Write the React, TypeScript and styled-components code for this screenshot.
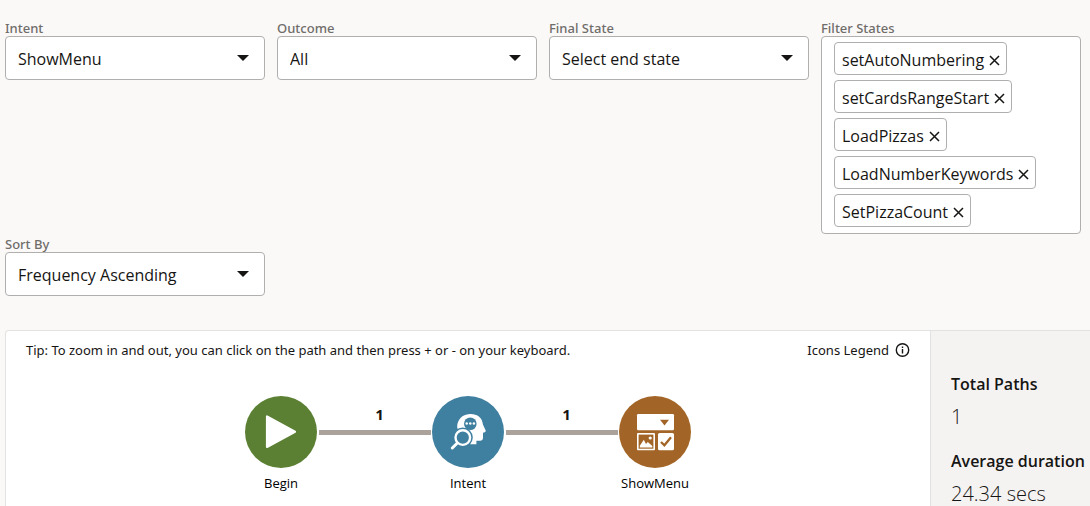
import React, { useState } from "react";
import styled, { createGlobalStyle } from "styled-components";

const GlobalStyle = createGlobalStyle`
  * { box-sizing: border-box; }
  body {
    margin: 0;
    background: #fbf9f8;
    color: #161513;
    font-family: "Open Sans", "Noto Sans", sans-serif;
    font-size: 16px;
  }
`;

const Page = styled.main`
  display: flex;
  flex-direction: column;
  min-height: 100vh;
  padding: 20px 0 0 5px;
`;

const Filters = styled.form`
  display: grid;
  grid-template-columns: repeat(4, 1fr);
  align-items: start;
  gap: 2px 12px;
  padding-right: 9px;
`;

const Field = styled.div`
  display: flex;
  flex-direction: column;
  min-width: 0;
`;

const Label = styled.label`
  color: #6f6d6a;
  font-family: "Noto Sans", "Open Sans", sans-serif;
  font-size: 13px;
  font-weight: 500;
  line-height: 16px;
`;

const SelectBox = styled.div`
  display: grid;
  grid-template-columns: 1fr auto;
  align-items: center;
`;

const Select = styled.select`
  grid-area: 1 / 1 / 2 / 3;
  appearance: none;
  width: 100%;
  height: 44px;
  padding: 2px 36px 0 12px;
  border: 1px solid #b1afad;
  border-radius: 4px;
  background: #fff;
  color: inherit;
  font: inherit;
`;

const Arrow = styled.svg`
  grid-area: 1 / 2 / 2 / 3;
  margin-right: 16px;
  pointer-events: none;
`;

const Chips = styled.ul`
  display: flex;
  flex-direction: column;
  align-items: flex-start;
  gap: 5px;
  margin: 0;
  padding: 5px 12px 6px;
  border: 1px solid #b1afad;
  border-radius: 4px;
  background: #fff;
  list-style: none;
`;

const Chip = styled.li`
  display: flex;
  align-items: center;
  gap: 5px;
  height: 33px;
  padding: 3px 6px 0 7px;
  border: 1px solid #b1afad;
  border-radius: 4px;
`;

const ChipRemove = styled.button`
  display: flex;
  padding: 0;
  border: 0;
  background: none;
  color: inherit;
  cursor: pointer;
`;

const Panel = styled.section`
  display: flex;
  flex: 1;
  margin-top: 34px;
  border: 1px solid #e4e2e0;
  border-width: 1px 0 0 1px;
  border-top-left-radius: 4px;
  background: #fff;
`;

const Canvas = styled.div`
  flex: 1;
  min-width: 0;
`;

const CanvasHeader = styled.header`
  display: flex;
  justify-content: space-between;
  align-items: center;
  padding: 9px 20px 0;
  font-family: "Noto Sans", "Open Sans", sans-serif;
  font-size: 13px;
  line-height: 20px;
`;

const Tip = styled.p`
  margin: 0;
`;

const LegendButton = styled.button`
  display: flex;
  align-items: center;
  gap: 6px;
  padding: 0;
  border: 0;
  background: none;
  color: inherit;
  font: inherit;
  cursor: pointer;
`;

const Path = styled.div`
  display: flex;
  justify-content: center;
  align-items: flex-start;
  margin-top: 36px;
`;

const Node = styled.figure`
  display: flex;
  flex-direction: column;
  align-items: center;
  width: 72px;
  margin: 0;
`;

const Disc = styled.svg<{ $color: string }>`
  width: 72px;
  height: 72px;
  border-radius: 50%;
  background: ${(p) => p.$color};
`;

const NodeName = styled.figcaption`
  margin-top: 5px;
  color: #000;
  font-size: 13px;
  line-height: 20px;
  white-space: nowrap;
`;

const Edge = styled.div`
  display: flex;
  flex-direction: column;
  justify-content: space-between;
  width: 115px;
  height: 39px;
  padding: 8px 1px 0 2px;
`;

const EdgeCount = styled.span`
  padding-left: 9px;
  font-size: 15px;
  font-weight: 700;
  line-height: 20px;
  text-align: center;
`;

const EdgeLine = styled.div`
  height: 5px;
  background: #aaa29b;
`;

const Stats = styled.dl`
  width: 160px;
  margin: 0;
  padding: 41px 0 0 20px;
  border-left: 1px solid #e4e2e0;
  background: #f5f3f2;
  white-space: nowrap;
`;

const StatName = styled.dt`
  font-weight: 600;
  line-height: 24px;
`;

const StatValue = styled.dd`
  margin: 9px 0 20px;
  font-size: 20px;
  font-weight: 300;
  line-height: 24px;

  &:last-child { margin-bottom: 0; }
`;

type DropDownProps = { id: string; label: string; options: string[] };

function DropDown({ id, label, options }: DropDownProps) {
  return (
    <Field>
      <Label htmlFor={id}>{label}</Label>
      <SelectBox>
        <Select id={id}>
          {options.map((o) => (
            <option key={o}>{o}</option>
          ))}
        </Select>
        <Arrow width="12" height="6" viewBox="0 0 12 6" aria-hidden="true">
          <path d="M0 0h12L6 6z" fill="#161513" />
        </Arrow>
      </SelectBox>
    </Field>
  );
}

function PlayIcon() {
  return (
    <path
      d="M22 20.5V51L50 35.700z"
      fill="#fff"
      stroke="#fff"
      strokeWidth="2.200"
      strokeLinejoin="round"
    />
  );
}

function IntentIcon({ color }: { color: string }) {
  return (
    <>
      <path
        d="M38.500 18C45.500 18 50.500 22 50.900 28.500L53.700 34.600Q54 35.900 52.800 36.200L51 36.700V41.800Q51 44.700 48 44.700H44.400V48.300H38V40L26 34Q24.600 31 25.400 28C27 21.500 32 18 38.500 18Z"
        fill="#fff"
      />
      <circle cx="38.300" cy="27.800" r="6.300" fill={color} />
      <circle cx="30.800" cy="41.600" r="10" fill={color} />
      <g fill="#fff">
        <circle cx="34.700" cy="27.500" r="1.250" />
        <circle cx="38.300" cy="27.500" r="1.250" />
        <circle cx="41.900" cy="27.500" r="1.250" />
      </g>
      <circle cx="30.800" cy="41.600" r="7.300" fill="none" stroke="#fff" strokeWidth="2.400" />
      <path d="M25.300 47L20.300 52" stroke="#fff" strokeWidth="3" strokeLinecap="round" />
    </>
  );
}

function MenuIcon({ color }: { color: string }) {
  return (
    <>
      <rect x="18" y="18" width="37" height="16.300" rx="1.200" fill="#fff" />
      <path d="M41 23.700h9L45.500 29.500z" fill={color} />
      <rect x="18" y="37" width="18" height="17.300" rx="1" fill="#fff" />
      <rect x="19.600" y="38.600" width="14.800" height="14.100" fill={color} />
      <path d="M20.800 51.600V49.800L24.800 43.800L27 48L28.800 46L33.300 50V51.600Z" fill="#fff" />
      <circle cx="31.200" cy="42" r="1.600" fill="#fff" />
      <rect x="39" y="37" width="16" height="17.300" rx="1.600" fill="#fff" />
      <path d="M42 46L45.400 49.300L52 41.300" fill="none" stroke={color} strokeWidth="2.300" />
    </>
  );
}

const states = [
  "setAutoNumbering",
  "setCardsRangeStart",
  "LoadPizzas",
  "LoadNumberKeywords",
  "SetPizzaCount",
];

const GREEN = "#5b8033";
const BLUE = "#3f7f9f";
const BROWN = "#a36527";

export default function App() {
  const [chips, setChips] = useState(states);

  return (
    <>
      <GlobalStyle />
      <Page>
        <Filters>
          <DropDown id="intent" label="Intent" options={["ShowMenu"]} />
          <DropDown id="outcome" label="Outcome" options={["All"]} />
          <DropDown id="final-state" label="Final State" options={["Select end state"]} />
          <Field>
            <Label as="span" id="filter-states">Filter States</Label>
            <Chips aria-labelledby="filter-states">
              {chips.map((name) => (
                <Chip key={name}>
                  {name}
                  <ChipRemove
                    type="button"
                    aria-label={`Remove ${name}`}
                    onClick={() => setChips(chips.filter((c) => c !== name))}
                  >
                    <svg width="11" height="11" viewBox="0 0 11 11" aria-hidden="true">
                      <path d="M1 1L10 10M10 1L1 10" stroke="#161513" strokeWidth="1.500" />
                    </svg>
                  </ChipRemove>
                </Chip>
              ))}
            </Chips>
          </Field>
          <DropDown id="sort-by" label="Sort By" options={["Frequency Ascending"]} />
        </Filters>

        <Panel>
          <Canvas>
            <CanvasHeader>
              <Tip>
                Tip: To zoom in and out, you can click on the path and then press + or - on your
                keyboard.
              </Tip>
              <LegendButton type="button">
                Icons Legend
                <svg width="15" height="15" viewBox="0 0 15 15" aria-hidden="true">
                  <circle cx="7.500" cy="7" r="6.200" fill="none" stroke="#161513" strokeWidth="1.400" />
                  <path d="M7.500 6V10.500M7.500 3.500V4.900" stroke="#161513" strokeWidth="1.400" />
                </svg>
              </LegendButton>
            </CanvasHeader>
            <Path>
              <Node>
                <Disc $color={GREEN} viewBox="0 0 72 72"><PlayIcon /></Disc>
                <NodeName>Begin</NodeName>
              </Node>
              <Edge>
                <EdgeCount>1</EdgeCount>
                <EdgeLine />
              </Edge>
              <Node>
                <Disc $color={BLUE} viewBox="0 0 72 72"><IntentIcon color={BLUE} /></Disc>
                <NodeName>Intent</NodeName>
              </Node>
              <Edge>
                <EdgeCount>1</EdgeCount>
                <EdgeLine />
              </Edge>
              <Node>
                <Disc $color={BROWN} viewBox="0 0 72 72"><MenuIcon color={BROWN} /></Disc>
                <NodeName>ShowMenu</NodeName>
              </Node>
            </Path>
          </Canvas>
          <Stats>
            <StatName>Total Paths</StatName>
            <StatValue>1</StatValue>
            <StatName>Average duration</StatName>
            <StatValue>24.34 secs</StatValue>
          </Stats>
        </Panel>
      </Page>
    </>
  );
}
